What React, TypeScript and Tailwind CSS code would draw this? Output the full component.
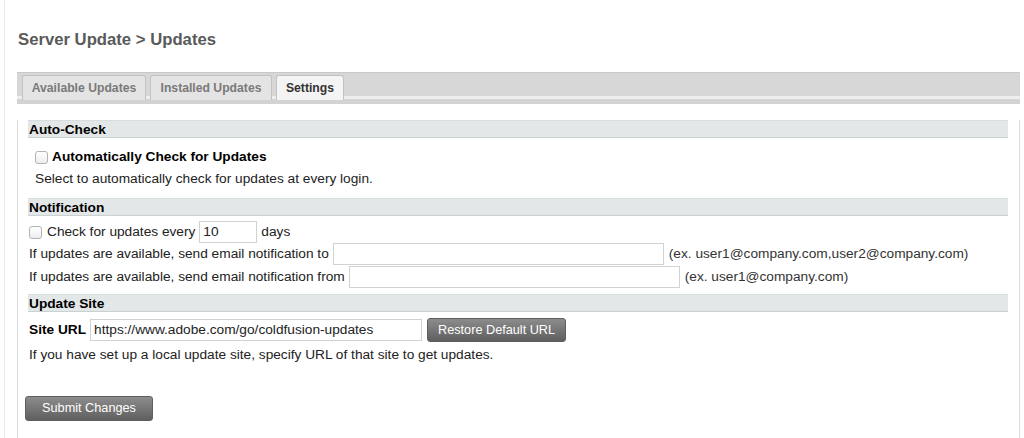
import React from 'react';

function Box({ className = '' }: { className?: string }) {
  return (
    <span
      className={`inline-block w-[13px] h-[13px] rounded-[3px] border border-[#b3b3b3] bg-[linear-gradient(#ffffff,#ededed)] shrink-0 ${className}`}
    />
  );
}

function SectionHeader({ title, className = '' }: { title: string; className?: string }) {
  return (
    <div
      className={`h-[18px] leading-[17px] pl-[1px] bg-[#e3e7e7] border-t border-[#d7dede] border-b border-b-[#c9d2d2] text-[13.7px] font-bold text-black ${className}`}
    >
      {title}
    </div>
  );
}

function TextBox({ width, value = '' }: { width: string; value?: string }) {
  return (
    <div
      className={`${width} h-[22px] border border-[#d2d2d2] bg-white leading-[20px] pl-[3px] text-[13.7px] text-[#222] shrink-0`}
    >
      {value}
    </div>
  );
}

const tabs = [
  { label: 'Available Updates', w: 'w-[124px]', active: false },
  { label: 'Installed Updates', w: 'w-[122px]', active: false },
  { label: 'Settings', w: 'w-[68px]', active: true },
];

export default function App() {
  return (
    <div className="w-[1024px] h-[438px] overflow-hidden bg-white font-['Liberation_Sans',Arial,sans-serif] text-[#222]">
      <div className="ml-[4px] h-full border-l border-[#e6e6e6] pl-[12px] pr-[4px]">
        {/* Title */}
        <div className="pt-[31px] pl-[1px] h-[72px] text-[16.7px] leading-[18px] font-bold text-[#5a5a5a]">
          Server Update &gt; Updates
        </div>

        {/* Tab strip */}
        <div className="h-[28px] border-t border-[#c9c9c9] bg-[linear-gradient(#d7d7d7_0,#d7d7d7_23px,#eeeeee_23px,#eeeeee_26px,#d5d5d5_26px)] flex items-end gap-[4px] pl-[5px]">
          {tabs.map(t => (
            <div
              key={t.label}
              className={`${t.w} h-[25px] rounded-t-[3px] border border-b-0 border-[#c2c2c2] flex items-center justify-center text-[12.2px] font-bold ${
                t.active ? 'bg-[#f4f4f4] text-[#333]' : 'bg-[#e4e4e4] text-[#7a7a7a]'
              }`}
            >
              {t.label}
            </div>
          ))}
        </div>
        <div className="h-[4px] bg-[#d3d3d3]" />

        {/* Content */}
        <div className="h-full border-l border-r border-[#dcdcdc] pl-[10px] pr-[11px] text-[13.7px]">
          <SectionHeader title="Auto-Check" className="mt-[16px]" />
          <div className="mt-[8px] h-[22px] flex items-center pl-[7px] gap-[4px]">
            <Box />
            <span className="font-bold text-black">Automatically Check for Updates</span>
          </div>
          <div className="h-[22px] leading-[22px] pl-[7px]">
            Select to automatically check for updates at every login.
          </div>

          <SectionHeader title="Notification" className="mt-[8px]" />
          <div className="mt-[5px] h-[22px] flex items-center pl-[1px]">
            <Box />
            <span className="ml-[5px]">Check for updates every</span>
            <div className="ml-[4px]">
              <TextBox width="w-[58px]" value="10" />
            </div>
            <span className="ml-[4px]">days</span>
          </div>
          <div className="h-[22px] flex items-center pl-[1px]">
            <span>If updates are available, send email notification to</span>
            <div className="ml-[4px]">
              <TextBox width="w-[331px]" />
            </div>
            <span className="ml-[5px] text-[#333]">(ex. user1@company.com,user2@company.com)</span>
          </div>
          <div className="mt-[1px] h-[22px] flex items-center pl-[1px]">
            <span>If updates are available, send email notification from</span>
            <div className="ml-[4px]">
              <TextBox width="w-[331px]" />
            </div>
            <span className="ml-[5px] text-[#333]">(ex. user1@company.com)</span>
          </div>

          <SectionHeader title="Update Site" className="mt-[6px]" />
          <div className="mt-[6px] h-[24px] flex items-center pl-[1px]">
            <span className="font-bold text-black">Site URL</span>
            <div className="ml-[4px]">
              <TextBox width="w-[332px]" value="https://www.adobe.com/go/coldfusion-updates" />
            </div>
            <button className="ml-[5px] w-[139px] h-[24px] rounded-[3px] border border-[#5e5e5e] bg-[linear-gradient(#8c8c8c,#5f5f5f)] text-white text-[12.7px] leading-[22px]">
              Restore Default URL
            </button>
          </div>
          <div className="mt-[4px] h-[18px] leading-[18px] pl-[1px]">
            If you have set up a local update site, specify URL of that site to get updates.
          </div>

          <button className="mt-[32px] -ml-[3px] w-[128px] h-[25px] rounded-[3px] border border-[#5e5e5e] bg-[linear-gradient(#8c8c8c,#5f5f5f)] text-white text-[12.7px] leading-[23px]">
            Submit Changes
          </button>
        </div>
      </div>
    </div>
  );
}
